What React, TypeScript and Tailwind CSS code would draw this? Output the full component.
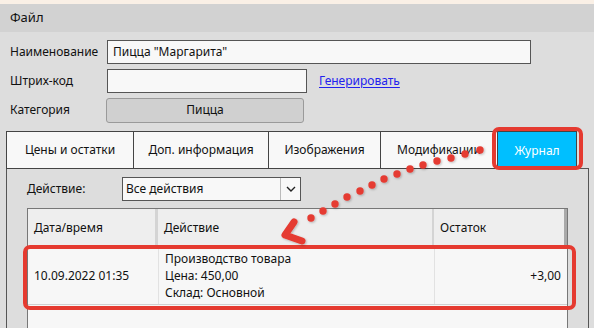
import React from "react";

const tabs = [
  { label: "Цены и остатки", w: "w-[127px]" },
  { label: "Доп. информация", w: "w-[135px]" },
  { label: "Изображения", w: "w-[112px]" },
  { label: "Модификации", w: "w-[117px]" },
];

const dots: [number, number][] = [
  [480, 150], [465, 154], [451, 158], [437, 161], [423, 165], [410, 169],
  [397, 174], [384, 179], [372, 185], [360, 191], [347, 197], [335, 204],
  [323, 211], [311, 218],
];

const App: React.FC = () => {
  return (
    <div className="relative w-[594px] h-[328px] overflow-hidden bg-[#dddddd] text-[12px] text-[#111] font-['Noto_Sans',sans-serif]">
      <div className="h-[4px] bg-[#faf0e6]" />
      {/* menu */}
      <div className="h-[28px] bg-[#d2d2d2] flex items-center pl-[10px] text-[13px]">Файл</div>

      {/* form */}
      <div className="flex flex-col gap-[5px] pt-[8px]">
        <div className="flex items-center h-[24px]">
          <span className="w-[107px] pl-[10px]">Наименование</span>
          <div className="w-[424px] h-[24px] border border-[#555] bg-[#f8f8f8] flex items-center px-[5px]">
            Пицца "Маргарита"
          </div>
        </div>
        <div className="flex items-center h-[24px]">
          <span className="w-[107px] pl-[10px]">Штрих-код</span>
          <div className="w-[200px] h-[24px] border border-[#555] bg-[#f8f8f8]" />
          <span className="ml-[12px] text-[#2222ee] underline underline-offset-2">Генерировать</span>
        </div>
        <div className="flex items-center h-[24px]">
          <span className="w-[106px] pl-[10px]">Категория</span>
          <div className="w-[198px] h-[25px] rounded-[3px] border border-[#9a9a9a] bg-[#d0d0d0] flex items-center justify-center">
            Пицца
          </div>
        </div>
      </div>

      {/* tabs */}
      <div className="flex mt-[9px] ml-[6px] h-[38px]">
        {tabs.map((t) => (
          <div
            key={t.label}
            className={`${t.w} border-t border-l border-b border-[#444] bg-[#f8f8f8] flex items-center justify-center text-[12px]`}
          >
            {t.label}
          </div>
        ))}
        <div className="w-[80px] border-t border-l border-r border-[#444] bg-[#00bfff] text-white flex items-center justify-center">
          Журнал
        </div>
      </div>

      {/* panel */}
      <div className="ml-[6px] w-[583px] h-[170px] -mt-px border-l border-t border-r border-[#555] bg-[#dddddd] pl-[20px] pt-[8px]">
        <div className="flex items-center h-[24px]">
          <span className="w-[95px]">Действие:</span>
          <div className="w-[179px] h-[24px] border border-[#555] bg-[#f8f8f8] flex items-center">
            <span className="flex-1 pl-[3px]">Все действия</span>
            <div className="w-[20px] h-full border-l border-[#bbb] flex items-center justify-center">
              <svg width="10" height="6" viewBox="0 0 10 6">
                <path d="M1 1 L5 5 L9 1" fill="none" stroke="#222" strokeWidth="1.4" />
              </svg>
            </div>
          </div>
        </div>

        {/* table */}
        <div className="mt-[7px] w-[541px] h-[130px] border-l border-t border-r border-[#777] bg-[#f7f7f7]">
          <div className="flex h-[38px] bg-[#eeeeee]">
            <div className="w-[130px] border-r-[3px] border-[#d4d4d4] flex items-center pl-[6px]">Дата/время</div>
            <div className="w-[276px] border-r-[2px] border-[#d4d4d4] flex items-center pl-[6px]">Действие</div>
            <div className="flex-1 border-r-[3px] border-[#a9a9a9] flex items-center pl-[6px]">Остаток</div>
          </div>
          <div className="flex h-[58px] border-b border-[#d0d0d0]">
            <div className="w-[131px] border-r border-[#e2e2e2] flex items-center pl-[6px]">10.09.2022 01:35</div>
            <div className="w-[276px] border-r border-[#e2e2e2] flex flex-col justify-center pl-[6px] leading-[17px]">
              <span>Производство товара</span>
              <span>Цена: 450,00</span>
              <span>Склад: Основной</span>
            </div>
            <div className="flex-1 flex items-center justify-end pr-[6px]">+3,00</div>
          </div>
        </div>
      </div>

      {/* annotations */}
      <svg className="absolute inset-0 pointer-events-none" width="594" height="328" viewBox="0 0 594 328">
        <defs>
          <filter id="sh" x="-50%" y="-50%" width="200%" height="200%">
            <feDropShadow dx="1" dy="1" stdDeviation="1" floodColor="#000" floodOpacity="0.25" />
          </filter>
        </defs>
        <rect x="494" y="129" width="87" height="39" rx="5" fill="none" stroke="#e53a30" strokeWidth="4" />
        <rect x="25" y="247" width="549" height="61" rx="5" fill="none" stroke="#e53a30" strokeWidth="4" />
        <g filter="url(#sh)">
          {dots.map(([x, y], i) => (
            <circle key={i} cx={x} cy={y} r="3.7" fill="#e53a30" />
          ))}
          <path d="M294 222 L285 235 L302 241" fill="none" stroke="#e53a30" strokeWidth="7" strokeLinecap="round" strokeLinejoin="round" />
        </g>
      </svg>
    </div>
  );
};

export default App;
